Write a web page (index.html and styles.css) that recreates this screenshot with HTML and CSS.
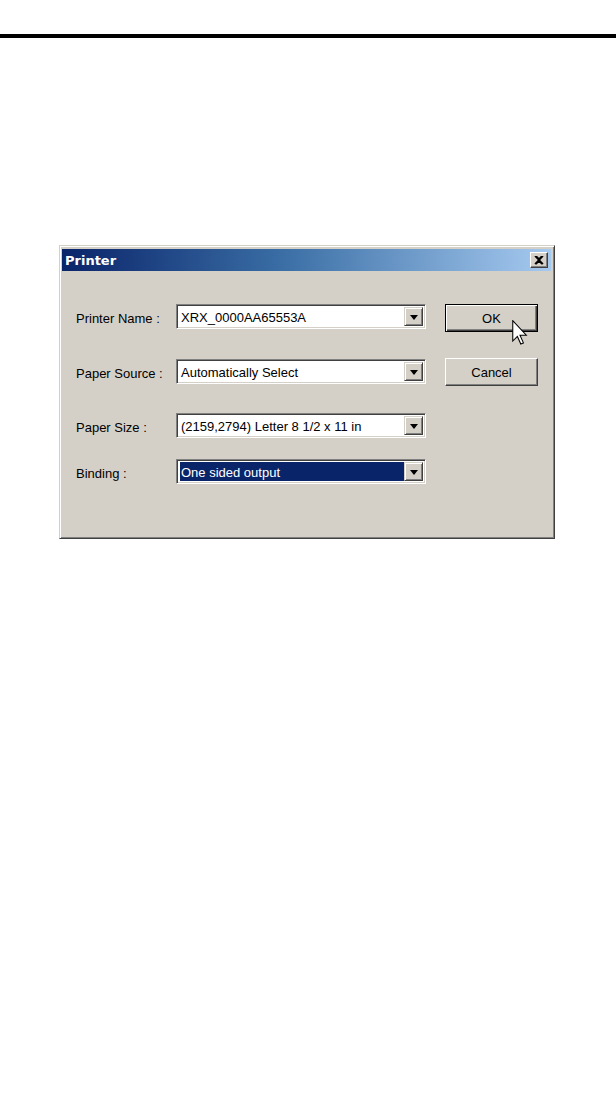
FILE: index.html
```html
<!DOCTYPE html>
<html>
<head>
<meta charset="utf-8">
<link rel="stylesheet" href="styles.css">
</head>
<body>
<div class="page">
  <div class="rule"></div>
  <div class="dialog">
    <div class="titlebar">
      <span class="title">Printer</span>
      <span class="close">
        <svg width="10" height="9" viewBox="0 0 10 9"><path d="M1 0 L5 4 L9 0 M1 8 L5 4 L9 8 M2 0 L5 3 L8 0 M2 8 L5 5 L8 8" stroke="#000" stroke-width="1.6" fill="none"/></svg>
      </span>
    </div>
    <div class="content">
      <div class="label r1">Printer Name :</div>
      <div class="combo r1"><div class="field">XRX_0000AA65553A</div><div class="drop"><span class="tri"></span></div></div>
      <div class="btn default r1"><span>OK</span></div>

      <div class="label r2">Paper Source :</div>
      <div class="combo r2"><div class="field">Automatically Select</div><div class="drop"><span class="tri"></span></div></div>
      <div class="btn r2 cancel"><span>Cancel</span></div>

      <div class="label r3">Paper Size :</div>
      <div class="combo r3"><div class="field">(2159,2794) Letter 8 1/2 x 11 in</div><div class="drop"><span class="tri"></span></div></div>

      <div class="label r4">Binding :</div>
      <div class="combo r4"><div class="field"><span class="sel">One sided output</span></div><div class="drop"><span class="tri"></span></div></div>

      <svg class="cursor" width="16" height="25" viewBox="0 0 12 19"><path d="M0.5 0.5 L0.5 16 L4 12.5 L6.6 18.3 L8.6 17.4 L6 11.6 L10.8 11.6 Z" fill="#fff" stroke="#000" stroke-width="0.8" stroke-linejoin="miter"/></svg>
    </div>
  </div>
</div>
</body>
</html>
```

FILE: styles.css
```css
html, body {
  margin: 0;
  padding: 0;
  background: #fff;
}
.page {
  width: 616px;
  height: 1093px;
  overflow: hidden;
  padding-top: 34px;
  box-sizing: border-box;
}
.rule {
  height: 4px;
  background: #000;
}
.dialog {
  margin: 207px 0 0 59px;
  width: 496px;
  height: 294px;
  box-sizing: border-box;
  background: #d4d0c8;
  border: 1px solid;
  border-color: #d4d0c8 #404040 #404040 #d4d0c8;
  box-shadow: inset 1px 1px #fff, inset -1px -1px #808080;
  padding: 3px 3px 3px 2px;
  font-family: "Liberation Sans", Arial, sans-serif;
  font-size: 13px;
  color: #000;
}
.titlebar {
  height: 22px;
  background: linear-gradient(to right, #0a246a 0%, #3a6ea5 45%, #a6caf0 100%);
  display: flex;
  align-items: center;
  justify-content: space-between;
  padding: 0 3px 0 3px;
}
.title {
  color: #fff;
  font-family: "DejaVu Sans", sans-serif;
  font-weight: bold;
  font-size: 13px;
}
.close {
  width: 18px;
  height: 16px;
  box-sizing: border-box;
  background: #d4d0c8;
  border: 1px solid;
  border-color: #fff #404040 #404040 #fff;
  box-shadow: inset -1px -1px #808080;
  display: flex;
  align-items: center;
  justify-content: center;
}
.content {
  position: relative;
  display: grid;
  grid-template-columns: 100px 250px 19px 93px;
  grid-template-rows: 55px 54px 46px 26px;
  align-items: start;
  padding: 33px 0 0 14px;
}
.label {
  grid-column: 1;
  height: 25px;
  line-height: 25px;
  padding-top: 2px;
  box-sizing: border-box;
  white-space: nowrap;
}
.r1 { grid-row: 1; }
.r2 { grid-row: 2; }
.r3 { grid-row: 3; }
.r4 { grid-row: 4; }
.combo {
  grid-column: 2;
  height: 25px;
  box-sizing: border-box;
  border: 1px solid;
  border-color: #808080 #fff #fff #808080;
  box-shadow: inset 1px 1px #404040, inset -1px -1px #d4d0c8;
  padding: 2px;
  display: flex;
  background: #fff;
}
.field {
  flex: 1;
  display: flex;
  align-items: center;
  padding-left: 2px;
  padding-top: 1px;
  white-space: nowrap;
  overflow: hidden;
}
.sel {
  background: #0a246a;
  color: #fff;
  align-self: stretch;
  flex: 1;
  display: flex;
  align-items: center;
  margin-left: -1px;
  margin-top: -1px;
  padding-left: 1px;
  padding-top: 1px;
}
.drop {
  width: 19px;
  box-sizing: border-box;
  background: #d4d0c8;
  border: 1px solid;
  border-color: #d4d0c8 #404040 #404040 #d4d0c8;
  box-shadow: inset 1px 1px #fff, inset -1px -1px #808080;
  display: flex;
  align-items: center;
  justify-content: center;
}
.tri {
  width: 0;
  height: 0;
  border-left: 4px solid transparent;
  border-right: 4px solid transparent;
  border-top: 5px solid #000;
  margin-top: 1px;
}
.btn {
  grid-column: 4;
  height: 27px;
  box-sizing: border-box;
  background: #d4d0c8;
  border: 1px solid;
  border-color: #fff #404040 #404040 #fff;
  box-shadow: inset -1px -1px #808080, inset 1px 1px #d4d0c8;
  display: flex;
  align-items: center;
  justify-content: center;
  padding-top: 1px;
}
.btn.default {
  height: 28px;
  border: 1px solid #000;
  box-shadow: inset 1px 1px #fff, inset -1px -1px #404040, inset -2px -2px #808080;
}
.btn.cancel {
  margin-top: -1px;
  height: 28px;
}
.cursor {
  position: absolute;
  left: 450px;
  top: 49px;
}
```
